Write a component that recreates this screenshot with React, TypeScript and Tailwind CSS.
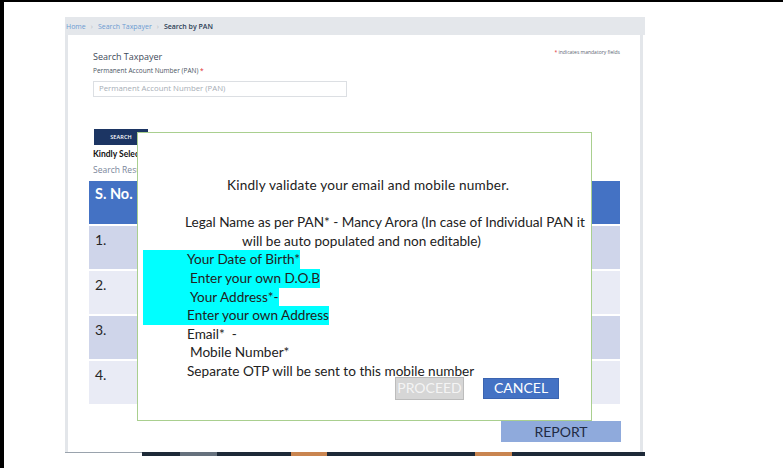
import React from 'react'

const calibri = "font-['Lato','Liberation_Sans',sans-serif]"

const rows = ['1.', '2.', '3.', '4.']

const footerBits = [
  { w: 'w-[38px]', c: 'bg-[#1e2a38]' },
  { w: 'w-[37px]', c: 'bg-[#66717d]' },
  { w: 'w-[74px]', c: 'bg-[#1e2a38]' },
  { w: 'w-[36px]', c: 'bg-[#c98550]' },
  { w: 'w-[148px]', c: 'bg-[#1e2a38]' },
  { w: 'w-[37px]', c: 'bg-[#c98550]' },
  { w: 'w-[133px]', c: 'bg-[#1e2a38]' },
]

const Breadcrumb = () => (
  <div className="h-[18px] bg-[#e4e7eb] flex items-center pl-[1px] gap-[5px] text-[7px] leading-none">
    <span className="text-[#6c9bd2]">Home</span>
    <span className="text-[#b6bcc4]">›</span>
    <span className="text-[#6c9bd2]">Search Taxpayer</span>
    <span className="text-[#b6bcc4]">›</span>
    <span className="text-[#2b3d55] font-semibold">Search by PAN</span>
  </div>
)

const ResultsTable = () => (
  <div className={`-ml-[4px] w-[531px] mt-[7px] ${calibri}`}>
    <div className="h-[43px] bg-[#4472c4] pl-[6px] pt-[4px] text-white font-bold text-[14.5px] leading-[18px]">
      S. No.
    </div>
    {rows.map((n, i) => (
      <div
        key={n}
        className={`h-[43px] mt-[2px] pl-[6px] pt-[5px] text-[14px] leading-[18px] text-[#262626] ${
          i % 2 === 0 ? 'bg-[#cfd5ea]' : 'bg-[#e9ebf5]'
        }`}
      >
        {n}
      </div>
    ))}
  </div>
)

const Modal = () => {
  const hl = 'ml-[5px] w-fit bg-[#00ffff]'
  return (
    <div
      className={`absolute left-[133px] top-[130px] w-[455px] h-[289px] bg-white border border-[#a9cf8f] pt-[43px] text-[13.6px] leading-[18.6px] text-[#222] whitespace-pre ${calibri}`}
    >
      <div className="pl-[89px] tracking-[0.2px]">Kindly validate your email and mobile number.</div>
      <div className="h-[18.6px]"></div>
      <div className="pl-[47px]">Legal Name as per PAN* - Mancy Arora (In case of Individual PAN it</div>
      <div className="pl-[104px]">will be auto populated and non editable)</div>
      <div className={`${hl} pl-[44px]`}>Your Date of Birth*</div>
      <div className={`${hl} pl-[47px]`}>Enter your own D.O.B</div>
      <div className={`${hl} pl-[47px]`}>Your Address*-</div>
      <div className={`${hl} pl-[44px]`}>Enter your own Address</div>
      <div className="pl-[49px]">Email*  -</div>
      <div className="pl-[52px]">Mobile Number*</div>
      <div className="pl-[49px]">Separate OTP will be sent to this mobile number</div>
      <div className="flex items-center gap-[19px] -mt-[4px] ml-[257px]">
        <button className="w-[69px] h-[23px] bg-[#d6d6d6] border border-[#bcbcbc] text-[#f4f4f4] text-[14px] leading-none">
          PROCEED
        </button>
        <button className="w-[76px] h-[21px] bg-[#4472c4] border border-[#3b64b0] text-white text-[14px] leading-none">
          CANCEL
        </button>
      </div>
    </div>
  )
}

export default function App() {
  return (
    <div className="relative w-[783px] h-[468px] overflow-hidden bg-white border-t-2 border-l-4 border-black font-['Open_Sans',sans-serif]">
      <div className="ml-[61px] mt-[15px] w-[580px]">
        <Breadcrumb />
        <div className="w-[578px] h-[417px] border-x-[3px] border-[#e3e6ea] pl-[25px] pr-[20px] pt-[16px]">
          <div className="flex justify-between items-start">
            <div className="text-[9px] leading-[12px] text-[#3e4a5a]">Search Taxpayer</div>
            <div className="-mt-[4px] text-[5px] leading-[10px] text-[#5a6470]">
              <span className="text-[#e0282e]">*</span> indicates mandatory fields
            </div>
          </div>
          <div className="mt-[3px] text-[6.5px] leading-[9px] text-[#4a5562]">
            Permanent Account Number (PAN) <span className="text-[#e0282e]">*</span>
          </div>
          <div className="mt-[6px] w-[254px] h-[16px] border border-[#dcdfe3] flex items-center pl-[5px] text-[7.8px] text-[#a6adb5]">
            Permanent Account Number (PAN)
          </div>
          <button className="mt-[32px] ml-[1px] w-[54px] h-[16px] bg-[#1c3563] text-white text-[5.5px] font-semibold tracking-wide">
            SEARCH
          </button>
          <div className={`mt-[5px] text-[8.5px] leading-[9px] font-bold text-[#111] ${calibri}`}>
            Kindly Select the Taxpayer
          </div>
          <div className="mt-[6px] text-[8.5px] leading-[9px] text-[#7a869a]">Search Results</div>
          <ResultsTable />
          <div className="flex justify-end mt-[17px] -mr-[1px] w-[532px] -ml-[4px]">
            <div className={`w-[120px] h-[21px] bg-[#8faadc] flex items-center justify-center text-[14px] text-[#1f2a44] ${calibri}`}>
              REPORT
            </div>
          </div>
        </div>
        <div className="flex items-start">
          <div className="w-[77px] h-[1px] bg-[#9aa3ad]"></div>
          {footerBits.map((b, i) => (
            <div key={i} className={`${b.w} h-[4px] ${b.c}`}></div>
          ))}
        </div>
      </div>
      <Modal />
    </div>
  )
}
